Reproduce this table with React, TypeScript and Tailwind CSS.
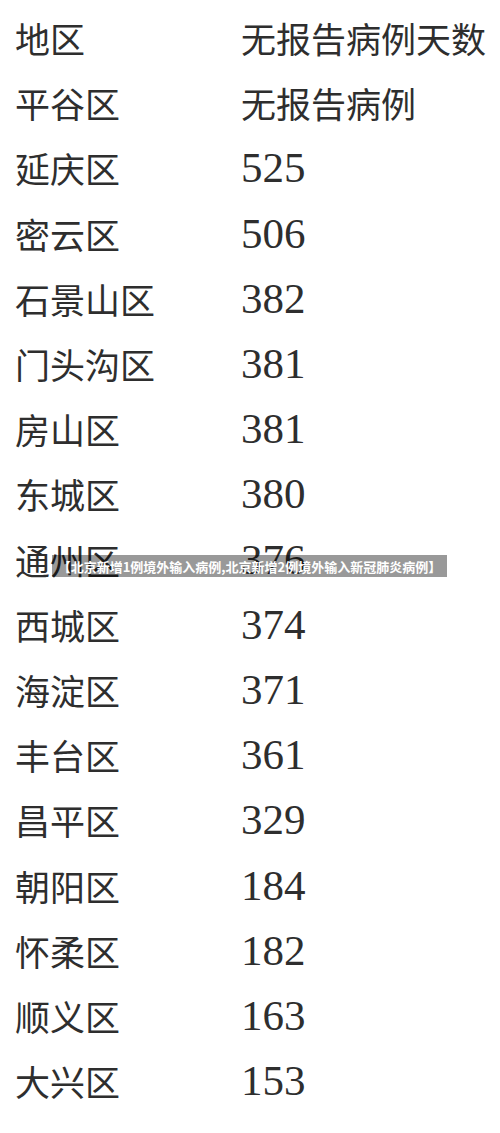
const rows: Array<[string, string]> = [
  ["平谷区", "无报告病例"],
  ["延庆区", "525"],
  ["密云区", "506"],
  ["石景山区", "382"],
  ["门头沟区", "381"],
  ["房山区", "381"],
  ["东城区", "380"],
  ["通州区", "376"],
  ["西城区", "374"],
  ["海淀区", "371"],
  ["丰台区", "361"],
  ["昌平区", "329"],
  ["朝阳区", "184"],
  ["怀柔区", "182"],
  ["顺义区", "163"],
  ["大兴区", "153"],
];

const cjk = "font-['Noto_Sans_CJK_SC',sans-serif] text-[35px] leading-none";
const num = "font-['Liberation_Serif',serif] text-[43px] leading-none";

export default function App() {
  return (
    <div className="relative w-[500px] h-[1133px] bg-white text-[#2e2e2e] overflow-hidden">
      <div className="pt-[5px] pl-[15px] flex flex-col">
        <div className="grid grid-cols-[226px_1fr] items-center h-[65.2px]">
          <span className={cjk}>地区</span>
          <span className={cjk}>无报告病例天数</span>
        </div>
        {rows.map(([area, days]) => (
          <div key={area} className="grid grid-cols-[226px_1fr] items-center h-[65.2px]">
            <span className={cjk}>{area}</span>
            <span className={/^\d+$/.test(days) ? num : cjk}>{days}</span>
          </div>
        ))}
      </div>

      {/* caption overlay */}
      <div className="absolute left-[52px] top-[555px] w-[395px] h-[22px] bg-black/40 flex items-center justify-center">
        <span className="font-['Noto_Sans_CJK_SC',sans-serif] text-[13px] font-bold text-white leading-none whitespace-nowrap">
          【北京新增1例境外输入病例,北京新增2例境外输入新冠肺炎病例】
        </span>
      </div>
    </div>
  );
}
